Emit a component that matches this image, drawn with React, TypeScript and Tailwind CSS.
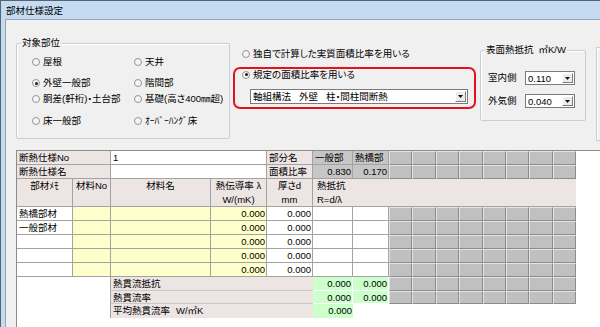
import React from "react";

function Radio({ checked }: { checked?: boolean }) {
  return (
    <span className="relative inline-flex w-[8px] h-[8px] rounded-full border border-[#939393] bg-[#f6f6f6] items-center justify-center shrink-0">
      {checked && <span className="w-[3px] h-[3px] rounded-full bg-[#1a1a1a]" />}
    </span>
  );
}

function RadioLabel({ label, checked, className = "" }: { label: string; checked?: boolean; className?: string }) {
  return (
    <div className={`flex items-center gap-[3px] h-[14px] leading-[14px] whitespace-nowrap ${className}`}>
      <Radio checked={checked} />
      <span>{label}</span>
    </div>
  );
}

function Arrow() {
  return (
    <span className="h-full w-[11px] shrink-0 bg-[#ececec] border border-t-[#ffffff] border-l-[#ffffff] border-r-[#7c7c7c] border-b-[#7c7c7c] flex items-center justify-center">
      <svg width="5" height="3" viewBox="0 0 5 3">
        <path d="M0 0 H5 L2.5 3 Z" fill="#111" />
      </svg>
    </span>
  );
}

function Gray() {
  return <div className="bg-[#c0c0c0] border border-t-[#e4e4e4] border-l-[#e4e4e4] border-r-[#8c8c8c] border-b-[#8c8c8c]" />;
}

function Grays() {
  return (
    <>
      {Array.from({ length: 8 }).map((_, i) => (
        <Gray key={i} />
      ))}
    </>
  );
}

const PINK = "bg-[#ede4e4]";
const CB = "border-r border-b border-[#a3a3a3]";
const TXT = "pl-[2px] leading-[13px] whitespace-nowrap overflow-hidden";
const NUM = "text-right pr-[1px] leading-[13px] whitespace-nowrap overflow-hidden";
const GREEN = "bg-[#ccffcc] border-r border-b border-white";

export default function App() {
  const dataRows = ["熱橋部材", "一般部材", "", "", ""];
  return (
    <div className="w-[600px] h-[327px] overflow-hidden bg-[#c4dbf2] border-t border-l border-[#59636e] [font-family:'Liberation_Sans','Noto_Sans_CJK_JP',sans-serif] [font-feature-settings:'palt'] text-[9.5px] text-black flex flex-col">
      <div className="h-[18px] shrink-0 pl-[5px] flex items-center pt-[2px] leading-none">部材仕様設定</div>
      <div className="flex-1 ml-[4px] border-t border-l border-[#96a5b5] bg-[#f0f0f0] flex flex-col min-h-0">
        {/* top section */}
        <div className="h-[130px] shrink-0 flex items-start">
          {/* 対象部位 */}
          <div className="relative ml-[10px] mt-[23px] w-[214px] h-[96px] shrink-0 border border-[#c8ced3] rounded-[2px] shadow-[inset_1px_1px_0_#ffffff] pl-[15px] pt-[11px]">
            <span className="absolute left-[4px] top-[-8px] px-[1px] bg-[#f0f0f0] leading-[14px]">対象部位</span>
            <div className="flex">
              <RadioLabel className="w-[102px]" label="屋根" />
              <RadioLabel label="天井" />
            </div>
            <div className="flex mt-[7px]">
              <RadioLabel className="w-[102px]" label="外壁一般部" checked />
              <RadioLabel label="階間部" />
            </div>
            <div className="flex mt-[2px]">
              <RadioLabel className="w-[102px]" label="胴差(軒桁)・土台部" />
              <RadioLabel label="基礎(高さ400㎜超)" />
            </div>
            <div className="flex mt-[8px]">
              <RadioLabel className="w-[102px]" label="床一般部" />
              <RadioLabel label="ｵｰﾊﾞｰﾊﾝｸﾞ床" />
            </div>
          </div>

          {/* center */}
          <div className="w-[250px] shrink-0">
            <RadioLabel className="mt-[27px] pl-[12px]" label="独自で計算した実質面積比率を用いる" />
            <div className="mt-[6px] ml-[3px] w-[243px] h-[42px] border-2 border-[#e5121b] rounded-[7px]">
              <RadioLabel className="pl-[7px] !h-[11px]" label="規定の面積比率を用いる" checked />
              <div className="mt-[9px] ml-[15px] w-[218px] h-[15px] border border-[#7a7a7a] bg-white flex items-center p-[1px]">
                <span className="flex-1 pl-[1px] leading-[12px] whitespace-nowrap">
                  軸組構法<span className="ml-[8px]">外壁</span>
                  <span className="ml-[8px]">柱・間柱間断熱</span>
                </span>
                <Arrow />
              </div>
            </div>
          </div>

          {/* 表面熱抵抗 */}
          <div className="relative mt-[30px] w-[106px] h-[71px] shrink-0 border border-[#c8ced3] rounded-[2px] shadow-[inset_1px_1px_0_#ffffff] pl-[7px] pt-[20px]">
            <span className="absolute left-[4px] top-[-8px] px-[1px] bg-[#f0f0f0] leading-[14px] whitespace-nowrap">
              表面熱抵抗<span className="ml-[5px]">㎡K/W</span>
            </span>
            <div className="flex items-center">
              <span className="w-[37px] leading-[14px]">室内側</span>
              <div className="w-[50px] h-[14px] border border-[#7a7a7a] bg-white flex items-center p-[1px]">
                <span className="flex-1 pl-[1px] leading-[11px]">0.110</span>
                <Arrow />
              </div>
            </div>
            <div className="flex items-center mt-[9px]">
              <span className="w-[37px] leading-[14px]">外気側</span>
              <div className="w-[50px] h-[14px] border border-[#7a7a7a] bg-white flex items-center p-[1px]">
                <span className="flex-1 pl-[1px] leading-[11px]">0.040</span>
                <Arrow />
              </div>
            </div>
          </div>

          {/* right cut-off group */}
          <div className="ml-[10px] mt-[27px] w-[20px] h-[94px] shrink-0 border-l border-t border-b border-[#c8ced3] shadow-[inset_1px_1px_0_#ffffff]" />
        </div>

        {/* table */}
        <div className="flex-1 ml-[10px] border-t border-l border-[#8c8c8c] bg-white min-h-0">
          <div className="grid grid-cols-[56px_38px_100px_56px_46px_40px_36px_repeat(8,23.375px)] grid-rows-[14px_14px_28px_14px_14px_14px_14px_14px_14px_13px_14px] w-[559px]">
            {/* row 1 */}
            <div className={`col-span-2 ${PINK} ${CB} ${TXT}`}>断熱仕様No</div>
            <div className={`col-span-2 bg-white ${CB} ${TXT}`}>1</div>
            <div className={`${PINK} ${CB} ${TXT}`}>部分名</div>
            <div className={`bg-[#c6c6c6] ${CB} ${TXT}`}>一般部</div>
            <div className={`bg-[#c6c6c6] ${CB} ${TXT}`}>熱橋部</div>
            <Grays />
            {/* row 2 */}
            <div className={`col-span-2 ${PINK} ${CB} ${TXT}`}>断熱仕様名</div>
            <div className={`col-span-2 bg-white ${CB} ${TXT}`}></div>
            <div className={`${PINK} ${CB} ${TXT}`}>面積比率</div>
            <div className={`bg-[#c6c6c6] ${CB} ${NUM}`}>0.830</div>
            <div className={`bg-[#c6c6c6] ${CB} ${NUM}`}>0.170</div>
            <Grays />
            {/* header row */}
            <div className={`${PINK} ${CB} text-center leading-[14px]`}>部材ﾒﾓ</div>
            <div className={`${PINK} ${CB} text-center leading-[14px] whitespace-nowrap`}>材料No</div>
            <div className={`${PINK} ${CB} text-center leading-[14px]`}>材料名</div>
            <div className={`${PINK} ${CB} text-center leading-[14px] whitespace-nowrap`}>
              <div>熱伝導率 λ</div>
              <div>W/(mK)</div>
            </div>
            <div className={`${PINK} ${CB} text-center leading-[14px]`}>
              <div>厚さd</div>
              <div>mm</div>
            </div>
            <div className={`col-span-10 ${PINK} border-b border-[#a3a3a3] pl-[4px] leading-[14px]`}>
              <div>熱抵抗</div>
              <div>R=d/λ</div>
            </div>
            {/* data rows */}
            {dataRows.map((label, i) => (
              <React.Fragment key={i}>
                <div className={`bg-white ${CB} ${TXT}`}>{label}</div>
                <div className={`bg-[#ffffcc] ${CB}`} />
                <div className={`bg-[#ffffcc] ${CB}`} />
                <div className={`bg-[#ffffcc] ${CB} ${NUM}`}>0.000</div>
                <div className={`bg-white ${CB} ${NUM}`}>0.000</div>
                <div className={`bg-white ${CB}`} />
                <div className={`bg-white ${CB}`} />
                <Grays />
              </React.Fragment>
            ))}
            {/* summary rows */}
            <div className="col-span-2 border-r border-[#a3a3a3]" />
            <div className={`col-span-3 ${PINK} border-b border-[#cfc6c6] ${TXT}`}>熱貫流抵抗</div>
            <div className={`${GREEN} ${NUM}`}>0.000</div>
            <div className={`${GREEN} ${NUM}`}>0.000</div>
            <Grays />
            <div className="col-span-2 border-r border-[#a3a3a3]" />
            <div className={`col-span-3 ${PINK} border-b border-[#cfc6c6] ${TXT}`}>熱貫流率</div>
            <div className={`${GREEN} ${NUM}`}>0.000</div>
            <div className={`${GREEN} ${NUM}`}>0.000</div>
            <Grays />
            <div className="col-span-2 border-r border-[#a3a3a3]" />
            <div className={`col-span-3 ${PINK} ${TXT}`}>
              平均熱貫流率<span className="ml-[6px]">W/㎡K</span>
            </div>
            <div className={`bg-[#ccffcc] ${NUM}`}>0.000</div>
            <div className="col-span-9" />
          </div>
        </div>
      </div>
    </div>
  );
}
